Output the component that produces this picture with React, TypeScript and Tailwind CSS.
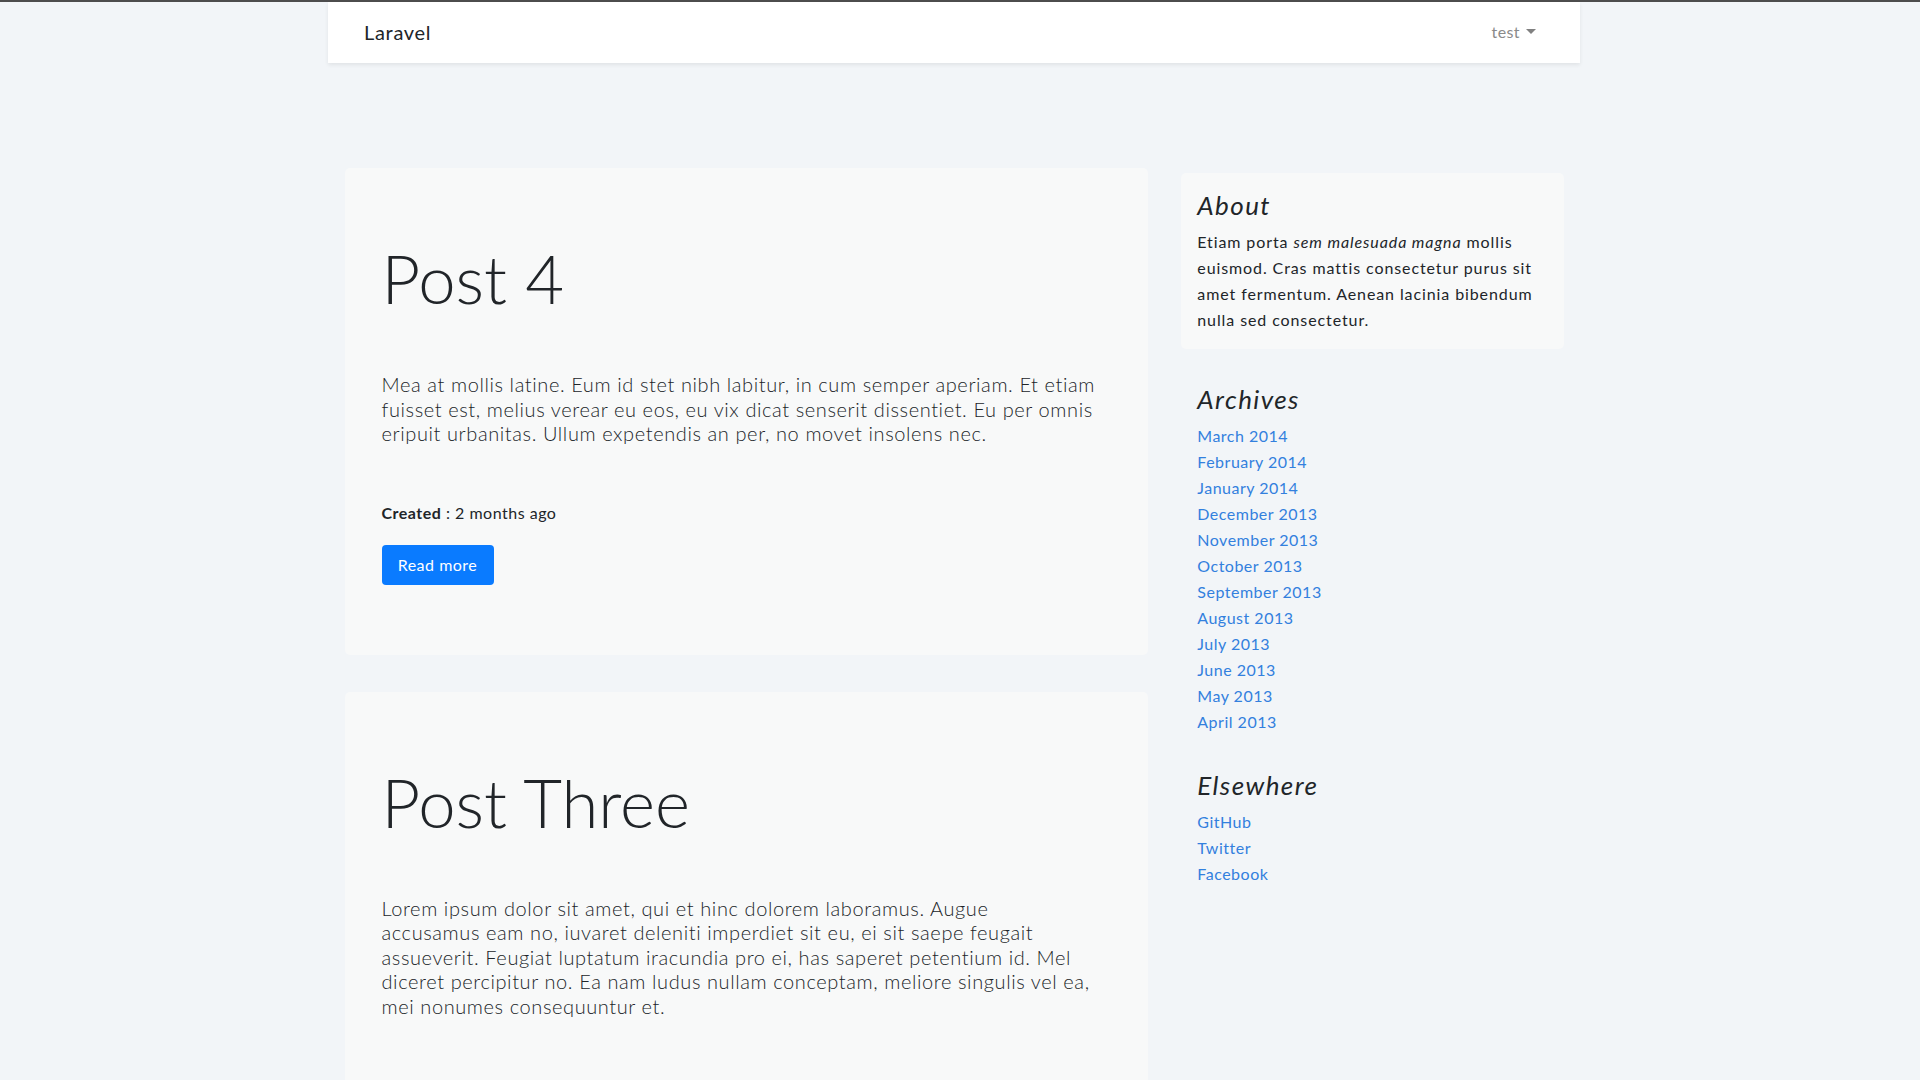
import React from 'react';

interface Post {
  title: string;
  lines: string[];
  created: string;
}

const posts: Post[] = [
  {
    title: 'Post 4',
    lines: [
      'Mea at mollis latine. Eum id stet nibh labitur, in cum semper aperiam. Et etiam',
      'fuisset est, melius verear eu eos, eu vix dicat senserit dissentiet. Eu per omnis',
      'eripuit urbanitas. Ullum expetendis an per, no movet insolens nec.',
    ],
    created: '2 months ago',
  },
  {
    title: 'Post Three',
    lines: [
      'Lorem ipsum dolor sit amet, qui et hinc dolorem laboramus. Augue',
      'accusamus eam no, iuvaret deleniti imperdiet sit eu, ei sit saepe feugait',
      'assueverit. Feugiat luptatum iracundia pro ei, has saperet petentium id. Mel',
      'diceret percipitur no. Ea nam ludus nullam conceptam, meliore singulis vel ea,',
      'mei nonumes consequuntur et.',
    ],
    created: '2 months ago',
  },
];

const archives = [
  'March 2014',
  'February 2014',
  'January 2014',
  'December 2013',
  'November 2013',
  'October 2013',
  'September 2013',
  'August 2013',
  'July 2013',
  'June 2013',
  'May 2013',
  'April 2013',
];

const elsewhere = ['GitHub', 'Twitter', 'Facebook'];

const PostCard: React.FC<{ post: Post }> = ({ post }) => (
  <div className="bg-[#f8f9f9] rounded-[5px] px-[37px] pt-[70px] pb-[70px]">
    <h1 className="text-[67px] leading-[80px] font-light text-[#212529]">{post.title}</h1>
    <p className="mt-[54px] text-[20px] leading-[24.5px] font-light tracking-[0.6px] text-[#212529] whitespace-nowrap">
      {post.lines.map((line, i) => (
        <span key={i} className="block">
          {line}
        </span>
      ))}
    </p>
    <p className="mt-[54px] text-[16px] leading-[25px] tracking-[0.5px] text-[#212529]">
      <strong className="font-bold">Created</strong> : {post.created}
    </p>
    <a
      href="#"
      className="mt-[20px] inline-flex items-center justify-center w-[112px] h-[40px] rounded-[4px] bg-[#0a7bff] text-white text-[16px] tracking-[0.5px]"
    >
      Read more
    </a>
  </div>
);

const SideHeading: React.FC<{ children: React.ReactNode }> = ({ children }) => (
  <h4 className="text-[26px] leading-[30px] italic tracking-[1.4px] mb-[9px] text-[#212529]">{children}</h4>
);

const LinkList: React.FC<{ items: string[] }> = ({ items }) => (
  <ol>
    {items.map((a) => (
      <li key={a} className="text-[16px] leading-[26px] tracking-[0.5px]">
        <a href="#" className="text-[#3380de]">
          {a}
        </a>
      </li>
    ))}
  </ol>
);

export default function App() {
  return (
    <div className="min-h-screen bg-[#f2f5f8] font-['Lato',sans-serif] text-[#212529]">
      <div className="h-[2px] bg-[#4d4d4d]" />
      <div className="ml-[328px] w-[1252px]">
        <nav className="h-[61px] bg-white shadow-[0_2px_4px_rgba(0,0,0,0.075)] flex items-center justify-between pl-[36px] pr-[44px]">
          <a href="#" className="text-[20px] tracking-[0.7px] text-[#212529] -mt-[2px]">
            Laravel
          </a>
          <button className="flex items-center gap-[6px] text-[16px] tracking-[0.4px] text-[#8a8a8a] -mt-[2px]">
            test
            <span className="inline-block w-0 h-0 border-x-[5px] border-x-transparent border-t-[5px] border-t-[#808080]" />
          </button>
        </nav>

        <main className="flex gap-[33px] px-[16.5px] pt-[105px]">
          <div className="w-[806px] flex flex-col gap-[37px]">
            {posts.map((post) => (
              <PostCard key={post.title} post={post} />
            ))}
          </div>

          <aside className="w-[384px] pt-[5px]">
            <div className="bg-[#f8f9f9] rounded-[5px] p-[16.5px]">
              <SideHeading>About</SideHeading>
              <p className="text-[16px] leading-[26px] tracking-[0.9px] text-[#212529]">
                Etiam porta <em>sem malesuada magna</em> mollis
                <br />
                euismod. Cras mattis consectetur purus sit
                <br />
                amet fermentum. Aenean lacinia bibendum
                <br />
                nulla sed consectetur.
              </p>
            </div>

            <div className="mt-[18.5px] p-[16.5px]">
              <SideHeading>Archives</SideHeading>
              <LinkList items={archives} />
            </div>

            <div className="mt-[2px] p-[16.5px]">
              <SideHeading>Elsewhere</SideHeading>
              <LinkList items={elsewhere} />
            </div>
          </aside>
        </main>
      </div>
    </div>
  );
}
